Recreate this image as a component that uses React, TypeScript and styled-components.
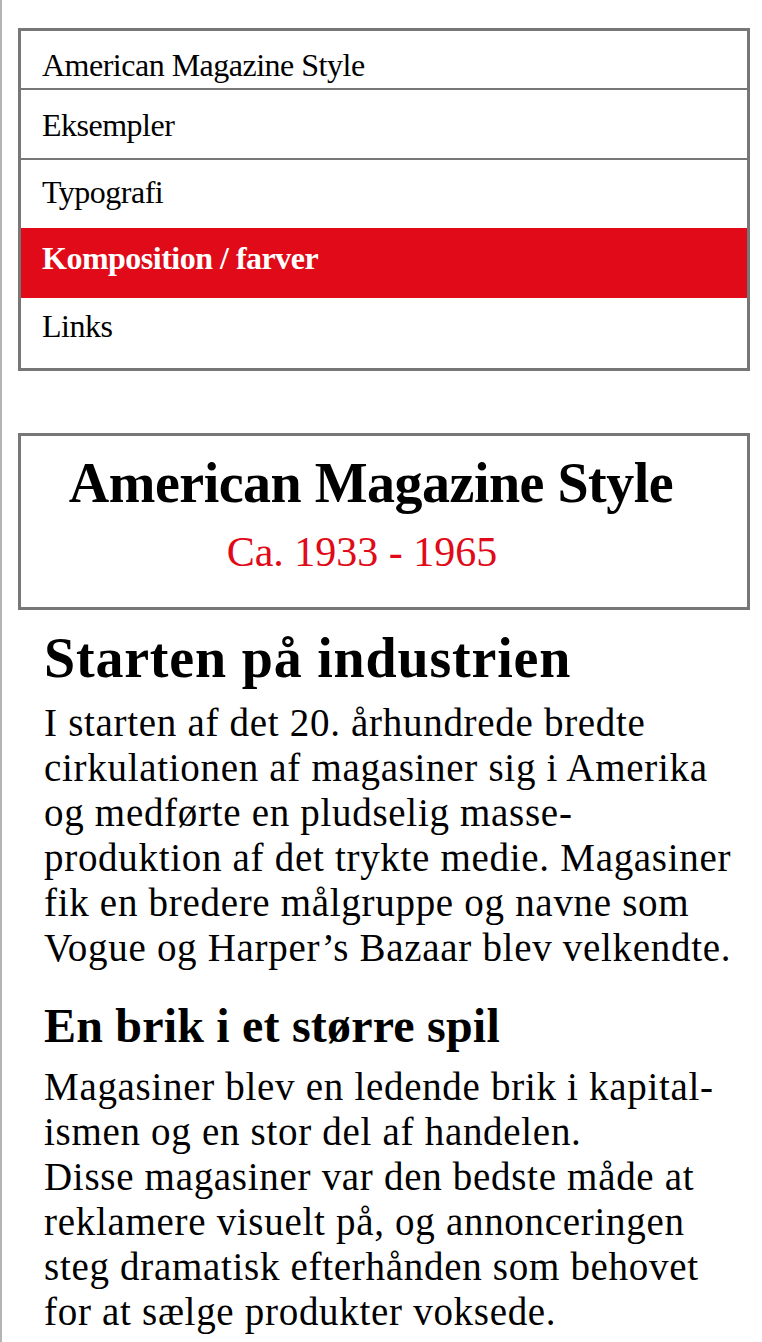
import React from "react";
import styled, { createGlobalStyle } from "styled-components";

const GlobalStyle = createGlobalStyle`
  html, body {
    margin: 0;
    padding: 0;
    background: #ffffff;
  }
  body {
    font-family: "Liberation Serif", "Times New Roman", serif;
    color: #000000;
  }
`;

const Page = styled.div`
  box-sizing: border-box;
  min-height: 1342px;
  border-left: 2px solid #b4b4b4;
  padding: 28px 12px 0 16px;
  display: flex;
  flex-direction: column;
`;

const Nav = styled.nav`
  border: 3px solid #777777;
  display: flex;
  flex-direction: column;
`;

const NavBrand = styled.a`
  display: block;
  height: 59px;
  box-sizing: border-box;
  padding: 19px 21px 0;
  font-size: 32px;
  line-height: 30px;
  letter-spacing: -0.5px;
  color: #000;
  text-decoration: none;
  border-bottom: 2px solid #777777;
`;

const NavItem = styled.a<{ $active?: boolean; $divider?: boolean; $h: number; $pt: number }>`
  display: block;
  box-sizing: border-box;
  height: ${(p) => p.$h}px;
  padding: ${(p) => p.$pt}px 21px 0;
  font-size: 32px;
  line-height: 30px;
  letter-spacing: -0.5px;
  text-decoration: none;
  color: ${(p) => (p.$active ? "#ffffff" : "#000000")};
  background: ${(p) => (p.$active ? "#e00a18" : "transparent")};
  font-weight: ${(p) => (p.$active ? 700 : 400)};
  border-bottom: ${(p) => (p.$divider ? "2px solid #777777" : "none")};
`;

const TitleBox = styled.header`
  margin-top: 62px;
  border: 3px solid #777777;
  height: 177px;
  box-sizing: border-box;
  padding: 20px 26px 0 0;
  display: flex;
  flex-direction: column;
  align-items: center;
  gap: 20px;
`;

const Title = styled.h1`
  margin: 0;
  font-size: 56px;
  line-height: 55px;
  font-weight: 700;
  letter-spacing: -0.5px;
`;

const Subtitle = styled.p`
  margin: 0;
  padding-right: 18px;
  font-size: 42px;
  line-height: 42px;
  color: #e00a18;
`;

const Article = styled.article`
  padding: 0 0 0 26px;
`;

const Heading = styled.h2`
  margin: 20px 0 14px;
  font-size: 56px;
  line-height: 56px;
  font-weight: 700;
  letter-spacing: 0.8px;
`;

const SubHeading = styled.h3`
  margin: 32px 0 14px;
  font-size: 48px;
  line-height: 48px;
  font-weight: 700;
  letter-spacing: 0.2px;
`;

const Paragraph = styled.p`
  margin: 0;
  font-size: 39px;
  line-height: 45px;
  letter-spacing: 0.7px;
  white-space: nowrap;
`;

export default function App() {
  return (
    <>
      <GlobalStyle />
      <Page>
        <Nav>
          <NavBrand href="#">American Magazine Style</NavBrand>
          <NavItem href="#" $h={70} $pt={20} $divider>
            Eksempler
          </NavItem>
          <NavItem href="#" $h={68} $pt={17}>
            Typografi
          </NavItem>
          <NavItem href="#" $h={70} $pt={15} $active>
            Komposition / farver
          </NavItem>
          <NavItem href="#" $h={70} $pt={13}>
            Links
          </NavItem>
        </Nav>

        <TitleBox>
          <Title>American Magazine Style</Title>
          <Subtitle>Ca. 1933 - 1965</Subtitle>
        </TitleBox>

        <Article>
          <Heading>Starten på industrien</Heading>
          <Paragraph>
            I starten af det 20. århundrede bredte
            <br />
            cirkulationen af magasiner sig i Amerika
            <br />
            og medførte en pludselig masse-
            <br />
            produktion af det trykte medie. Magasiner
            <br />
            fik en bredere målgruppe og navne som
            <br />
            Vogue og Harper’s Bazaar blev velkendte.
          </Paragraph>
          <SubHeading>En brik i et større spil</SubHeading>
          <Paragraph>
            Magasiner blev en ledende brik i kapital-
            <br />
            ismen og en stor del af handelen.
            <br />
            Disse magasiner var den bedste måde at
            <br />
            reklamere visuelt på, og annonceringen
            <br />
            steg dramatisk efterhånden som behovet
            <br />
            for at sælge produkter voksede.
          </Paragraph>
        </Article>
      </Page>
    </>
  );
}
